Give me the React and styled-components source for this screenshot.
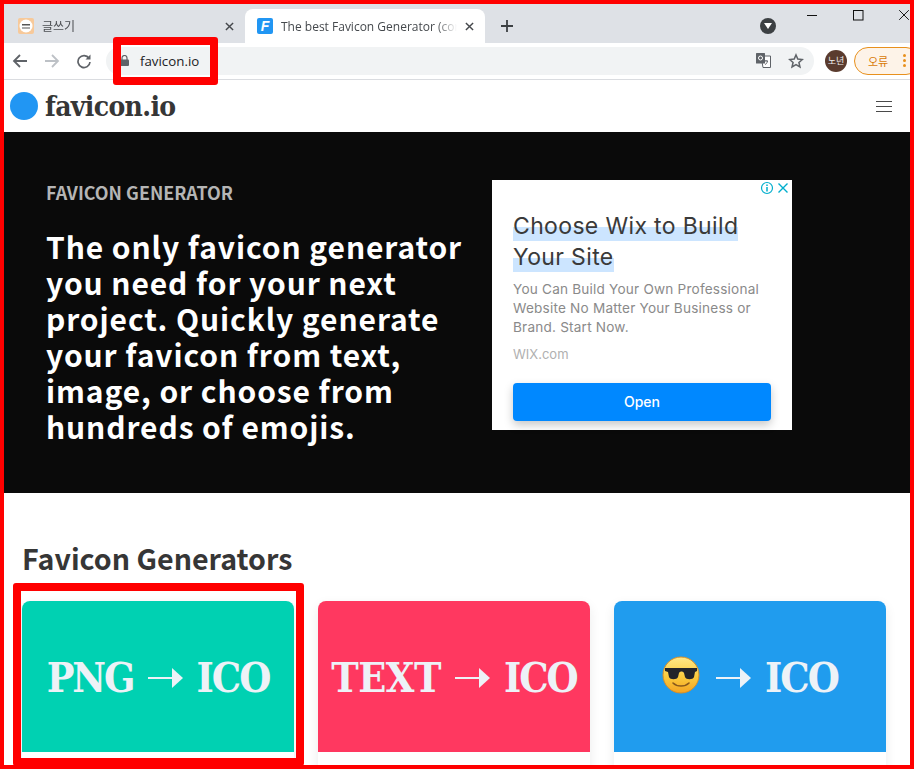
import React from 'react';
import styled, { createGlobalStyle } from 'styled-components';

const red = '#ff0000';
const sans = '"Noto Sans CJK KR", "Noto Sans", sans-serif';
const chromeFont = '"Open Sans", "Noto Sans CJK KR", sans-serif';
const slab = '"DejaVu Serif Condensed", "DejaVu Serif", serif';

const Global = createGlobalStyle`
	html, body { margin: 0; padding: 0; background: #fff; }
	* { box-sizing: border-box; }
`

const Frame = styled.div`
	position: relative;
	width: 914px;
	height: 769px;
	border: 4px solid ${red};
	overflow: hidden;
	background: #fff;
`

const TabStrip = styled.div`
	height: 39px;
	background: #dee1e6;
	display: flex;
	align-items: flex-end;
	position: relative;
`

const Tab = styled.div`
	width: ${p => p.$active ? '240px' : '241px'};
	height: 34px;
	display: flex;
	align-items: center;
	padding-left: ${p => p.$active ? '12px' : '14px'};
	padding-right: 11px;
	gap: 8px;
	background: ${p => p.$active ? '#fff' : 'transparent'};
	border-radius: 8px 8px 0 0;
	font: 12px ${chromeFont};
	color: ${p => p.$active ? '#45494d' : '#4a4d51'};
`

const TabTitle = styled.span`
	flex: 1;
	white-space: nowrap;
	overflow: hidden;
	-webkit-mask-image: linear-gradient(to right, #000 88%, transparent);
	mask-image: linear-gradient(to right, #000 88%, transparent);
`

const BrandTile = styled.span`
	width: 16px;
	height: 16px;
	border-radius: 2px;
	background: #2196f3;
	color: #fff;
	font: italic 700 14px/16px "Liberation Sans", sans-serif;
	text-align: center;
	flex: none;
`

const NewTab = styled.div`
	width: 44px;
	height: 34px;
	display: flex;
	align-items: center;
	justify-content: center;
`

const Spacer = styled.div`
	flex: 1;
`

const StripDrop = styled.div`
	width: 16px;
	height: 16px;
	margin: 0 134px 9px 0;
	border-radius: 50%;
	background: #3c4043;
	display: flex;
	align-items: center;
	justify-content: center;
`

const WindowButtons = styled.div`
	position: absolute;
	top: 3px;
	right: 0;
	width: 103px;
	height: 16px;
	display: flex;
	justify-content: space-between;
	align-items: center;
`

const Toolbar = styled.div`
	height: 37px;
	display: flex;
	align-items: center;
	padding-bottom: 1px;
	background: #fff;
	border-bottom: 1px solid #dadce0;
`

const NavIcon = styled.div`
	width: 32px;
	height: 20px;
	flex: none;
	display: flex;
	align-items: center;
	justify-content: center;
`

const Omnibox = styled.div`
	width: 708px;
	height: 28px;
	flex: none;
	margin-left: 6px;
	padding: 0 10px 0 14px;
	border-radius: 14px;
	background: #f1f3f4;
	display: flex;
	align-items: center;
	font: 13.3px ${chromeFont};
	color: #202124;
`

const Url = styled.span`
	margin-left: 11px;
	flex: 1;
`

const OmniIcons = styled.div`
	display: flex;
	align-items: center;
	gap: 17px;
`

const Avatar = styled.div`
	width: 22px;
	height: 22px;
	margin-left: 11px;
	flex: none;
	border-radius: 50%;
	background: #5a3b2e;
	color: #eee;
	font: 9px/22px ${sans};
	text-align: center;
`

const ErrorPill = styled.div`
	width: 66px;
	height: 28px;
	margin-left: 7px;
	flex: none;
	padding-left: 13px;
	border: 1px solid #e8901c;
	border-radius: 14px;
	background: #fdf3e8;
	color: #d97a06;
	font: 11px ${sans};
	display: flex;
	align-items: center;
	gap: 15px;
`

const Dots = styled.span`
	display: flex;
	flex-direction: column;
	gap: 2px;
	i {
		width: 3px;
		height: 3px;
		border-radius: 50%;
		background: #e8901c;
	}
`

const Navbar = styled.nav`
	height: 52px;
	padding: 0 18px 0 6px;
	display: flex;
	align-items: center;
	justify-content: space-between;
`

const Logo = styled.div`
	display: flex;
	align-items: center;
	gap: 7px;
	font: 700 28px ${slab};
	letter-spacing: -.65px;
	color: #363636;
`

const LogoDot = styled.span`
	width: 28px;
	height: 28px;
	border-radius: 50%;
	background: #2196f3;
`

const Burger = styled.div`
	width: 16px;
	display: flex;
	flex-direction: column;
	gap: 4px;
	i {
		height: 1px;
		background: #4a4a4a;
	}
`

const Hero = styled.section`
	height: 361px;
	background: #0a0a0a;
	display: flex;
	padding: 47px 0 0 42px;
	gap: 28px;
`

const HeroText = styled.div`
	width: 418px;
	flex: none;
`

const Eyebrow = styled.p`
	margin: 0;
	font: 700 17.9px/26px ${sans};
	color: #b5b5b5;
`

const HeroTitle = styled.h1`
	margin: 23px 0 0;
	font: 700 30px/36px ${sans};
	letter-spacing: .9px;
	white-space: nowrap;
	color: #fff;
`

const Ad = styled.aside`
	position: relative;
	width: 300px;
	height: 250px;
	margin-top: 1px;
	background: #fff;
	padding: 31px 21px 0;
	font-family: Inter, sans-serif;
`

const AdMarks = styled.div`
	position: absolute;
	top: 1px;
	right: 2px;
	display: flex;
	gap: 2px;
`

const AdHeadline = styled.h2`
	margin: 0;
	font: 400 23px/31px Inter, sans-serif;
	letter-spacing: .35px;
	color: #3a3a3a;
	span {
		background: linear-gradient(to bottom, transparent 52%, #cce5ff 52%, #cce5ff 100%);
		padding-bottom: 1px;
	}
`

const AdBody = styled.p`
	margin: 7px 0 0;
	font-size: 13.6px;
	letter-spacing: .2px;
	line-height: 19px;
	color: #8a8a8a;
`

const AdSource = styled.p`
	margin: 8px 0 0;
	font-size: 13px;
	line-height: 19px;
	color: #b0b0b0;
`

const AdButton = styled.div`
	height: 38px;
	margin-top: 19px;
	border-radius: 4px;
	background: #0088ff;
	box-shadow: 0 4px 10px rgba(0,0,0,.22);
	color: #fff;
	font-size: 14px;
	font-weight: 500;
	line-height: 38px;
	text-align: center;
`

const Generators = styled.section`
	padding: 43px 20px 0 18px;
`

const SectionTitle = styled.h2`
	margin: 0 0 21px;
	font: 700 28.6px/44px ${sans};
	color: #363636;
`

const CardGrid = styled.div`
	display: grid;
	grid-template-columns: repeat(3, 272px);
	gap: 24px;
`

const Card = styled.article`
	height: 220px;
	border-radius: 8px;
	background: #fff;
	box-shadow: 0 4px 12px rgba(0,0,0,.08);
	overflow: hidden;
`

const CardImage = styled.div`
	height: 151px;
	padding-top: 3px;
	background: ${p => p.$bg};
	display: flex;
	align-items: center;
	justify-content: center;
	gap: 14px;
	color: #edf2f7;
	font: 700 41px ${slab};
`

const CardWord = styled.span`
	letter-spacing: ${p => p.$tracking}px;
`

const FaceSlot = styled.span`
	display: flex;
	margin: 0 2px 6px 0;
`

const Annotation = styled.div`
	position: absolute;
	left: ${p => p.$x}px;
	top: ${p => p.$y}px;
	width: ${p => p.$w}px;
	height: ${p => p.$h}px;
	border: 8px solid ${red};
	border-radius: 3px;
	pointer-events: none;
`

const CloseIcon = ({ size = 9, color = '#45484c', width = 1.6 }) => (
	<svg width={size} height={size} viewBox="0 0 10 10" style={{ flex: 'none' }}>
		<path d="M1 1 9 9M9 1 1 9" stroke={color} strokeWidth={width} fill="none" />
	</svg>
)

const Arrow = () => (
	<svg width="35" height="20" viewBox="0 0 35 20" style={{ flex: 'none' }}>
		<path d="M0 9h25v2H0z" fill="#edf2f7" />
		<path d="M24 0 35 10 24 20z" fill="#edf2f7" />
		<path d="M24 3 30 10 24 17z" fill="#edf2f7" />
	</svg>
)

const CoolFace = () => (
	<svg width="38" height="38" viewBox="0 0 38 38" style={{ flex: 'none' }}>
		<defs>
			<linearGradient id="face" x1="0" y1="0" x2="0" y2="1">
				<stop offset="0" stopColor="#ffe98a" />
				<stop offset=".55" stopColor="#fbcb3d" />
				<stop offset="1" stopColor="#f3a423" />
			</linearGradient>
		</defs>
		<circle cx="19" cy="19" r="18" fill="url(#face)" stroke="#d98e25" strokeWidth="1" />
		<path d="M3 12h32v3l-2 1-1 5c-1 3-8 3-9 0l-1-4c-1-2-4-2-5 0l-1 4c-1 3-8 3-9 0l-1-5-3-1z" fill="#23242a" />
		<path d="M11 27c4 4 12 4 16 0" stroke="#8a5a1c" strokeWidth="1.6" fill="none" strokeLinecap="round" />
	</svg>
)

const App = () => {
	return (
		<Frame>
			<Global />
			<TabStrip>
				<Tab>
					<svg width="16" height="16" viewBox="0 0 16 16" style={{ flex: 'none' }}>
						<rect width="16" height="16" rx="2" fill="#f7c99a" />
						<circle cx="8" cy="8" r="6.5" fill="#fff" />
						<path d="M4 6h8v1.500H4zM4 9.500h8v1H4z" fill="#555" />
					</svg>
					<TabTitle>글쓰기</TabTitle>
					<CloseIcon />
				</Tab>
				<Tab $active>
					<BrandTile>F</BrandTile>
					<TabTitle>The best Favicon Generator (cor</TabTitle>
					<CloseIcon />
				</Tab>
				<NewTab>
					<svg width="12" height="12" viewBox="0 0 12 12">
						<path d="M6 0v12M0 6h12" stroke="#3c4043" strokeWidth="1.8" />
					</svg>
				</NewTab>
				<Spacer />
				<StripDrop>
					<svg width="8" height="6" viewBox="0 0 8 6"><path d="M0 0h8L4 6z" fill="#fff" /></svg>
				</StripDrop>
				<WindowButtons>
					<svg width="11" height="11" viewBox="0 0 11 11"><path d="M0 5.5h10" stroke="#111" strokeWidth="1" /></svg>
					<svg width="11" height="11" viewBox="0 0 11 11"><rect x=".5" y=".5" width="9.5" height="9.5" fill="none" stroke="#111" /></svg>
					<CloseIcon size={12} color="#111" width={.8} />
				</WindowButtons>
			</TabStrip>

			<Toolbar>
				<NavIcon>
					<svg width="16" height="16" viewBox="0 0 16 16"><path d="M15 8H2M8 2 2 8l6 6" stroke="#5f6368" strokeWidth="1.8" fill="none" /></svg>
				</NavIcon>
				<NavIcon>
					<svg width="16" height="16" viewBox="0 0 16 16"><path d="M1 8h13M8 2l6 6-6 6" stroke="#bdc1c6" strokeWidth="1.8" fill="none" /></svg>
				</NavIcon>
				<NavIcon>
					<svg width="16" height="16" viewBox="0 0 16 16">
						<path d="M13 5.2A6 6 0 1 0 14 9" stroke="#5f6368" strokeWidth="1.7" fill="none" />
						<path d="M14.5 1.5v5h-5z" fill="#5f6368" />
					</svg>
				</NavIcon>
				<Omnibox>
					<svg width="9" height="11" viewBox="0 0 9 11" style={{ flex: 'none' }}>
						<path d="M2 5V3a2.5 2.5 0 0 1 5 0v2" stroke="#5f6368" strokeWidth="1.2" fill="none" />
						<rect y="4.5" width="9" height="6.5" rx="1" fill="#5f6368" />
					</svg>
					<Url>favicon.io</Url>
					<OmniIcons>
						<svg width="15" height="15" viewBox="0 0 15 15">
							<path d="M5 3h9.500v11.500H7z" fill="#fff" stroke="#5f6368" />
							<rect width="9" height="10.500" rx=".5" fill="#5f6368" />
							<circle cx="4.500" cy="5" r="2" fill="none" stroke="#fff" />
							<path d="M10 7v1M9 8h3M11.500 8c-.4 2-1.300 3-2.500 3.600" stroke="#5f6368" fill="none" />
						</svg>
						<svg width="16" height="16" viewBox="0 0 24 24">
							<path d="m12 3 2.700 6.200 6.800.6-5.100 4.500 1.500 6.600L12 17.400l-5.900 3.500 1.500-6.600-5.100-4.500 6.800-.6z" stroke="#5f6368" strokeWidth="2.300" fill="none" />
						</svg>
					</OmniIcons>
				</Omnibox>
				<Avatar>노년</Avatar>
				<ErrorPill>
					오류
					<Dots><i /><i /><i /></Dots>
				</ErrorPill>
			</Toolbar>

			<Navbar>
				<Logo>
					<LogoDot />
					favicon.io
				</Logo>
				<Burger><i /><i /><i /></Burger>
			</Navbar>

			<Hero>
				<HeroText>
					<Eyebrow>FAVICON GENERATOR</Eyebrow>
					<HeroTitle>
						The only favicon generator<br />
						you need for your next<br />
						project. Quickly generate<br />
						your favicon from text,<br />
						image, or choose from<br />
						hundreds of emojis.
					</HeroTitle>
				</HeroText>
				<Ad>
					<AdMarks>
						<svg width="14" height="14" viewBox="0 0 14 14">
							<circle cx="7" cy="7" r="5.500" fill="none" stroke="#00aecd" strokeWidth="1.200" />
							<path d="M7 6v4.500M7 3.500v1.500" stroke="#00aecd" strokeWidth="1.500" />
						</svg>
						<svg width="14" height="14" viewBox="0 0 14 14">
							<path d="M2.500 2.500l9 9M11.500 2.500l-9 9" stroke="#00aecd" strokeWidth="1.400" />
						</svg>
					</AdMarks>
					<AdHeadline><span>Choose Wix to Build</span><br /><span>Your Site</span></AdHeadline>
					<AdBody>You Can Build Your Own Professional Website No Matter Your Business or Brand. Start Now.</AdBody>
					<AdSource>WIX.com</AdSource>
					<AdButton>Open</AdButton>
				</Ad>
			</Hero>

			<Generators>
				<SectionTitle>Favicon Generators</SectionTitle>
				<CardGrid>
					<Card>
						<CardImage $bg="#00d1b2"><CardWord $tracking={-2}>PNG</CardWord><Arrow /><CardWord $tracking={-2}>ICO</CardWord></CardImage>
					</Card>
					<Card>
						<CardImage $bg="#ff3860"><CardWord $tracking={-.5}>TEXT</CardWord><Arrow /><CardWord $tracking={-2}>ICO</CardWord></CardImage>
					</Card>
					<Card>
						<CardImage $bg="#209cee"><FaceSlot><CoolFace /></FaceSlot><Arrow /><CardWord $tracking={-2}>ICO</CardWord></CardImage>
					</Card>
				</CardGrid>
			</Generators>

			<Annotation $x={109} $y={33} $w={105} $h={48} />
			<Annotation $x={9} $y={579} $w={291} $h={183} />
		</Frame>
	)
}

export default App;
